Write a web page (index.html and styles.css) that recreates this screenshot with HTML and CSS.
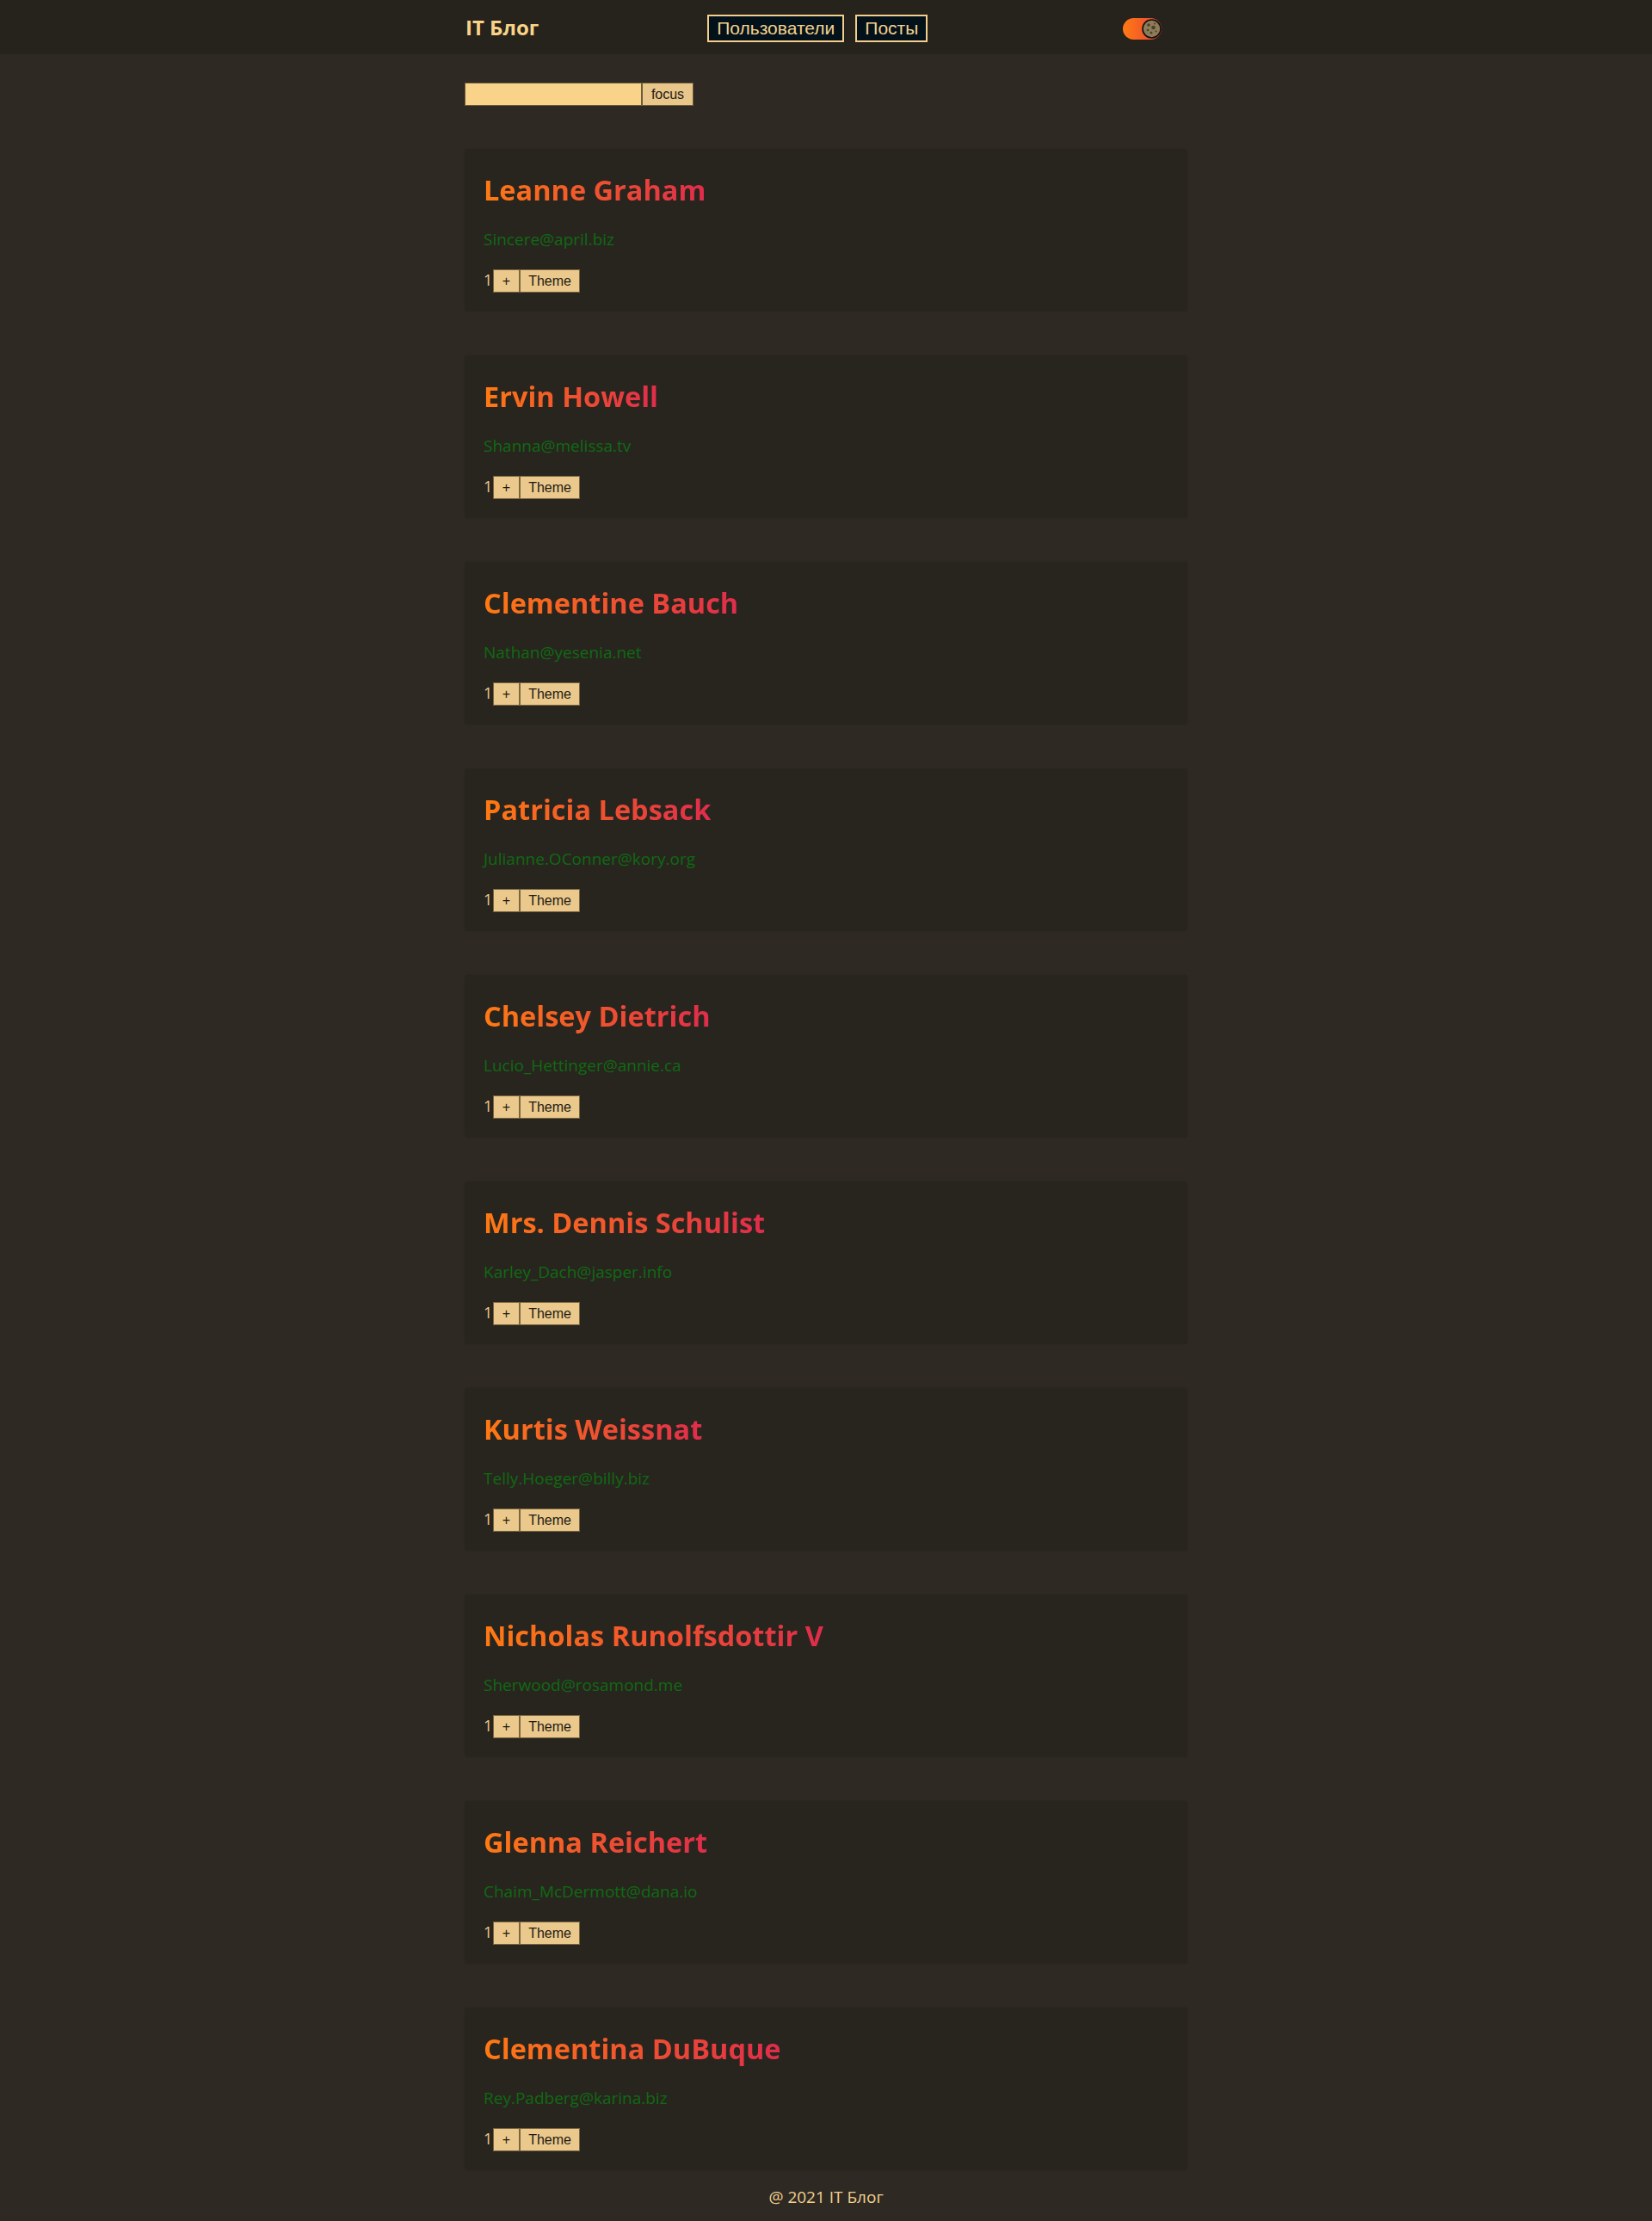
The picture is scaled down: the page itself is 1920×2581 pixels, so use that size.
FILE: index.html
```html
<!DOCTYPE html>
<html lang="ru">
<head>
<meta charset="utf-8">
<title>IT Блог</title>
<link rel="stylesheet" href="styles.css">
</head>
<body>
<header class="header">
  <div class="header-inner">
    <div class="logo">IT Блог</div>
    <nav class="nav">
      <button class="nav-btn">Пользователи</button>
      <button class="nav-btn">Посты</button>
    </nav>
    <div class="toggle">
      <svg class="knob" width="23" height="23" viewBox="0 0 23 23">
        <circle cx="11.5" cy="11.5" r="10.5" fill="#8d7c57" stroke="#111" stroke-width="1.6"/>
        <circle cx="8" cy="7" r="1.8" fill="#4b4130"/>
        <circle cx="13.5" cy="10" r="2.3" fill="#4b4130"/>
        <circle cx="7" cy="13" r="1.3" fill="#4b4130"/>
        <circle cx="11" cy="16" r="1.5" fill="#4b4130"/>
        <circle cx="16.5" cy="14.5" r="1.1" fill="#4b4130"/>
        <circle cx="15" cy="5.5" r="1" fill="#4b4130"/>
      </svg>
    </div>
  </div>
</header>
<main class="main">
  <div class="search">
    <input class="search-input" type="text">
    <button class="search-btn">focus</button>
  </div>
  <div class="cards">
    <div class="card"><h2 class="name">Leanne Graham</h2><p class="email">Sincere@april.biz</p><div class="row"><span class="count">1</span><button class="btn">+</button><button class="btn">Theme</button></div></div>
    <div class="card"><h2 class="name">Ervin Howell</h2><p class="email">Shanna@melissa.tv</p><div class="row"><span class="count">1</span><button class="btn">+</button><button class="btn">Theme</button></div></div>
    <div class="card"><h2 class="name">Clementine Bauch</h2><p class="email">Nathan@yesenia.net</p><div class="row"><span class="count">1</span><button class="btn">+</button><button class="btn">Theme</button></div></div>
    <div class="card"><h2 class="name">Patricia Lebsack</h2><p class="email">Julianne.OConner@kory.org</p><div class="row"><span class="count">1</span><button class="btn">+</button><button class="btn">Theme</button></div></div>
    <div class="card"><h2 class="name">Chelsey Dietrich</h2><p class="email">Lucio_Hettinger@annie.ca</p><div class="row"><span class="count">1</span><button class="btn">+</button><button class="btn">Theme</button></div></div>
    <div class="card"><h2 class="name">Mrs. Dennis Schulist</h2><p class="email">Karley_Dach@jasper.info</p><div class="row"><span class="count">1</span><button class="btn">+</button><button class="btn">Theme</button></div></div>
    <div class="card"><h2 class="name">Kurtis Weissnat</h2><p class="email">Telly.Hoeger@billy.biz</p><div class="row"><span class="count">1</span><button class="btn">+</button><button class="btn">Theme</button></div></div>
    <div class="card"><h2 class="name">Nicholas Runolfsdottir V</h2><p class="email">Sherwood@rosamond.me</p><div class="row"><span class="count">1</span><button class="btn">+</button><button class="btn">Theme</button></div></div>
    <div class="card"><h2 class="name">Glenna Reichert</h2><p class="email">Chaim_McDermott@dana.io</p><div class="row"><span class="count">1</span><button class="btn">+</button><button class="btn">Theme</button></div></div>
    <div class="card"><h2 class="name">Clementina DuBuque</h2><p class="email">Rey.Padberg@karina.biz</p><div class="row"><span class="count">1</span><button class="btn">+</button><button class="btn">Theme</button></div></div>
  </div>
</main>
<footer class="footer">@ 2021 IT Блог</footer>
</body>
</html>
```

FILE: styles.css
```css
* { box-sizing: border-box; }
html, body { margin: 0; padding: 0; }
body {
  background: #2e2a23;
  font-family: "Open Sans", "Noto Sans", sans-serif;
  color: #f3d08e;
}
.header {
  background: #26231d;
  height: 63px;
}
.header-inner {
  width: 840px;
  height: 63px;
  margin: 0 auto;
  padding-top: 3px;
  display: flex;
  align-items: center;
}
.logo {
  font-weight: 700;
  font-size: 24px;
  color: #f9d388;
  margin-left: 1px;
  margin-top: -2px;
  line-height: 30px;
}
.nav {
  display: flex;
  gap: 13px;
  margin-left: 196px;
}
.nav-btn {
  font-family: "Liberation Sans", Arial, sans-serif;
  font-size: 21px;
  color: #f3d18e;
  background: #03111a;
  border: 2px solid #f3cf8b;
  padding: 2px 9px;
  margin: 0;
  line-height: 24px;
}
.toggle {
  margin-left: auto;
  margin-right: 30px;
  width: 45px;
  height: 25px;
  border-radius: 13px;
  background: linear-gradient(90deg, #ff7a12, #e8403c);
  display: flex;
  align-items: center;
  justify-content: flex-end;
}
.knob { display: block; }
.main {
  width: 840px;
  margin: 0 auto;
  padding-top: 33px;
}
.search {
  display: flex;
  margin-bottom: 50px;
}
.search-input {
  width: 206px;
  height: 27px;
  background: #fad38a;
  border: 1px solid #6e5b3a;
  margin: 0;
  padding: 0 4px;
}
.search-btn {
  height: 27px;
  width: 60px;
  margin: 0;
  padding: 0;
  background: #e9c78a;
  border: 1px solid #6e5b3a;
  font-family: "Liberation Sans", Arial, sans-serif;
  font-size: 16px;
  color: #1e1a14;
}
.cards {
  display: flex;
  flex-direction: column;
  gap: 51px;
}
.card {
  background: #28251f;
  border-radius: 4px;
  padding: 25px 22px 22px;
  box-shadow: 0 0 2px rgba(0,0,0,0.15);
}
.name {
  display: inline-block;
  margin: 0;
  font-size: 32.5px;
  line-height: 46px;
  font-weight: 700;
  background: linear-gradient(90deg, #ff7a12, #e02c4b);
  -webkit-background-clip: text;
  background-clip: text;
  color: transparent;
  vertical-align: top;
}
.email {
  margin: 21px 0 0;
  font-size: 19px;
  line-height: 26px;
  color: #0f6a12;
}
.row {
  margin-top: 22px;
  display: flex;
  align-items: baseline;
}
.count {
  font-family: "Open Sans", "Noto Sans", sans-serif;
  font-size: 18px;
  color: #ecc98b;
  margin-right: 1px;
}
.btn {
  font-family: "Liberation Sans", Arial, sans-serif;
  font-size: 16px;
  line-height: 19px;
  height: 27px;
  padding: 3px 9.5px;
  margin: 0;
  background: #ebc98c;
  border: 1px solid #7a6540;
  color: #1e1a14;
}
.footer {
  text-align: center;
  font-size: 19px;
  line-height: 26px;
  padding: 18px 0 15px;
  color: #f1cf8f;
}
```
